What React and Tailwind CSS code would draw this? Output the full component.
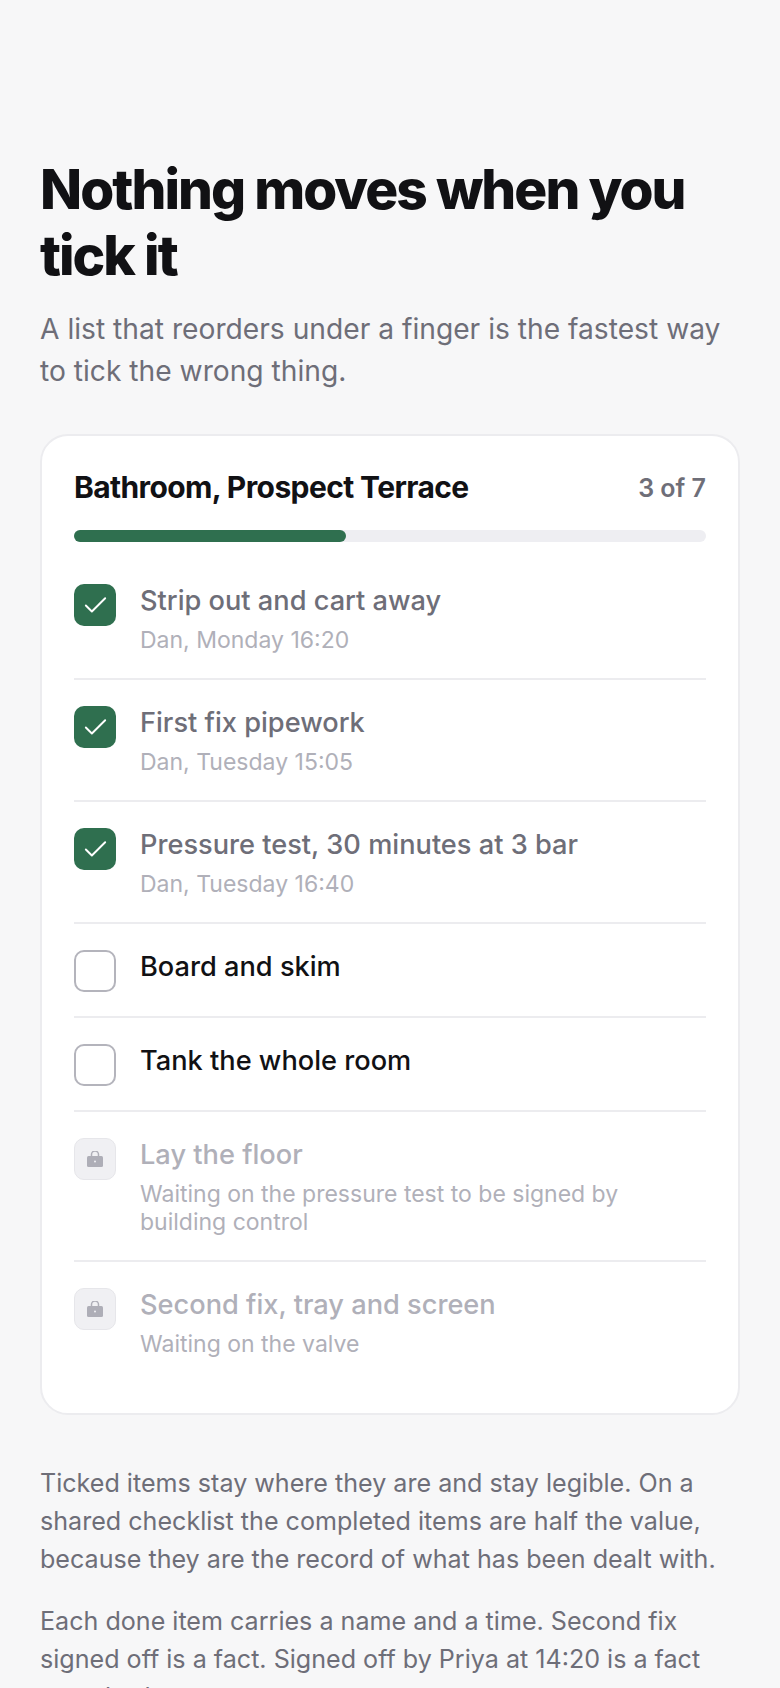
import React from "react";
import { Check } from "lucide-react";

const items = [
    { state: "done", title: "Strip out and cart away", sub: "Dan, Monday 16:20" },
    { state: "done", title: "First fix pipework", sub: "Dan, Tuesday 15:05" },
    { state: "done", title: "Pressure test, 30 minutes at 3 bar", sub: "Dan, Tuesday 16:40" },
    { state: "open", title: "Board and skim" },
    { state: "open", title: "Tank the whole room" },
    { state: "locked", title: "Lay the floor", sub: "Waiting on the pressure test to be signed by building control" },
    { state: "locked", title: "Second fix, tray and screen", sub: "Waiting on the valve" },
];

function Box({ state }) {
    if (state === "done") {
        return (
            <div className="w-[42px] h-[42px] shrink-0 rounded-[10px] bg-[#2f6f4f] flex items-center justify-center">
                <Check className="text-white" size={29} strokeWidth={1.6} />
            </div>
        );
    }
    if (state === "open") {
        return <div className="w-[42px] h-[42px] shrink-0 rounded-[10px] border-2 border-[#b4b4bc] bg-white" />;
    }
    return (
        <div className="w-[42px] h-[42px] shrink-0 rounded-[10px] border border-[#e6e6ea] bg-[#f0f0f3] flex items-center justify-center">
            <svg width="16" height="16" viewBox="0 0 16 16" className="text-[#aeaeb7]">
                <path d="M4.5 6V3.5a3.5 3.5 0 0 1 7 0V6" fill="none" stroke="currentColor" strokeWidth="1.5" />
                <rect x="0" y="5" width="16" height="11" rx="1.5" fill="currentColor" />
                <circle cx="8" cy="10.5" r="1" fill="#f0f0f3" />
            </svg>
        </div>
    );
}

function Row({ item }) {
    const titleColor =
        item.state === "done" ? "text-[#6e6e78]" : item.state === "open" ? "text-[#111114]" : "text-[#b0b0b9]";
    return (
        <li className="flex gap-6 pt-[26px] pb-6 border-b-2 border-[#ececef] last:border-b-0">
            <Box state={item.state} />
            <div className="min-w-0">
                <div className={`text-[27.2px] leading-[34px] font-medium ${titleColor}`}>{item.title}</div>
                {item.sub && <div className="mt-2 text-[23px] leading-[28px] text-[#b0b0b9]">{item.sub}</div>}
            </div>
        </li>
    );
}

export default function App() {
    return (
        <div className="h-[1688px] overflow-hidden bg-[#f7f7f8] px-10 pt-[156px] font-['Inter',sans-serif]">
            <h1 className="text-[55px] leading-[66px] font-extrabold tracking-[-0.036em] text-[#111114]">
                Nothing moves when you tick it
            </h1>
            <p className="mt-5 text-[28.2px] leading-[42px] text-[#6e6e78]">
                A list that reorders under a finger is the fastest way to tick the wrong thing.
            </p>

            {/* Checklist card */}
            <div className="mt-[42px] bg-white border-2 border-[#ececef] rounded-[28px] px-8 pt-[33px] pb-[31px]">
                <div className="flex items-center justify-between">
                    <h2 className="text-[30px] leading-[36px] font-bold tracking-[-0.02em] text-[#111114]">
                        Bathroom, Prospect Terrace
                    </h2>
                    <span className="mt-[2px] text-[25px] leading-[34px] font-semibold text-[#6e6e78]">3 of 7</span>
                </div>
                <div className="mt-[25px] h-3 rounded-full bg-[#eeeef2]">
                    <div className="h-3 w-[43%] rounded-full bg-[#2f6f4f]" />
                </div>
                <ul className="mt-[16px]">
                    {items.map((item) => (
                        <Row key={item.title} item={item} />
                    ))}
                </ul>
            </div>

            <div className="mt-[49px] text-[25.1px] leading-[38px] text-[#6e6e78]">
                <p>
                    Ticked items stay where they are and stay legible. On a shared checklist the completed items are
                    half the value, because they are the record of what has been dealt with.
                </p>
                <p className="mt-6">
                    Each done item carries a name and a time. Second fix signed off is a fact. Signed off by Priya at
                    14:20 is a fact somebody can act on tomorrow.
                </p>
            </div>
        </div>
    );
}
